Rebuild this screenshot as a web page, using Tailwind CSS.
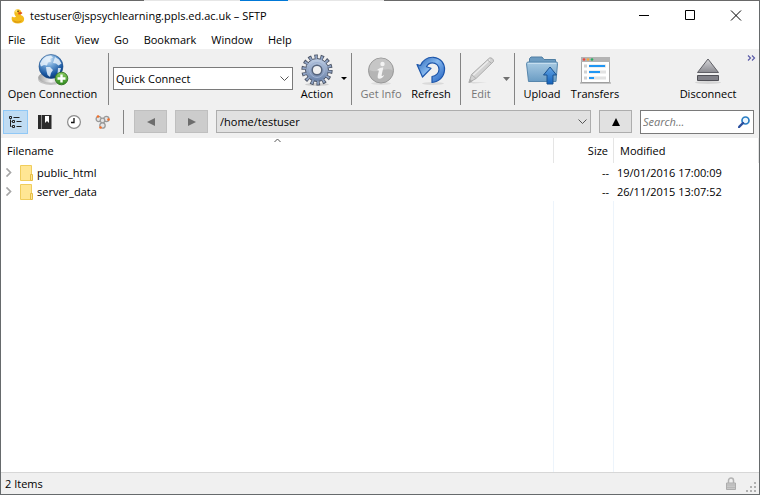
<!DOCTYPE html>
<html lang="en">
<head>
    <meta charset="UTF-8">
    <meta name="viewport" content="width=device-width, initial-scale=1.0">
    <title>testuser@jspsychlearning.ppls.ed.ac.uk – SFTP</title>
    <!-- Tailwind CSS -->
    <script src="https://cdn.jsdelivr.net/npm/@tailwindcss/browser@4"></script>
</head>
<body class="h-screen flex flex-col bg-white text-black text-[11px] leading-4 font-['Open_Sans','Noto_Sans',sans-serif] overflow-hidden">
    <!-- Desktop edge above the window -->
    <div class="flex h-px shrink-0 bg-[#696969]">
        <div class="w-36"></div>
        <div class="w-24 bg-[#e6e6e6]"></div>
        <div class="w-12 bg-[#0078d7]"></div>
        <div class="w-24 bg-[#e6e6e6]"></div>
    </div>

    <div class="flex-1 min-h-0 flex flex-col border border-t-0 border-[#666a6c]">
        <!-- Title bar -->
        <header class="flex items-center h-[30px] shrink-0 pl-[9px]">
            <svg class="size-4 mr-1" viewBox="0 0 16 16">
                <path d="M2 8.500c1 1 2.500 1 4 .2C4.500 7 4 5.500 4.500 3.500 5.200 1 8.800.4 10.500 2.300c1.200 1.500 1 3.300.1 4.700 2.800.8 4.100 2.800 3.400 5.200-.6 2.200-3 3.300-6 3.300-3.600 0-6-1.500-6.300-4C1.600 10.200 1.700 9.300 2 8.500z" fill="#f3bc1b"/>
                <path d="M3 11.500c2 2.500 6.500 2.800 9 .6-.7 2-2.600 2.700-5 2.600-2.200-.1-3.700-1.300-4-3.200z" fill="#d99410"/>
                <circle cx="6.500" cy="3" r="1.500" fill="#ffe36b"/>
                <path d="M8 4.500l3-.5 1.500 1-1.500 1.200-2.500.2z" fill="#e0541a"/>
                <circle cx="8" cy="3.300" r=".8" fill="#4b3000"/>
            </svg>
            <h1>testuser@jspsychlearning.ppls.ed.ac.uk – SFTP</h1>
            <div class="ml-auto flex h-full">
                <button aria-label="Minimize" class="w-[46px] flex items-center justify-center">
                    <svg class="size-3" viewBox="0 0 12 12"><path d="M1 5.500h10" stroke="#000"/></svg>
                </button>
                <button aria-label="Maximize" class="w-[46px] flex items-center justify-center">
                    <svg class="size-3" viewBox="0 0 12 12"><path d="M1.500 .5h9v9h-9z" fill="none" stroke="#000"/></svg>
                </button>
                <button aria-label="Close" class="w-[46px] flex items-center justify-center">
                    <svg class="size-3" viewBox="0 0 12 12"><path d="M1 .5l10 10M11 .5L1 10.500" stroke="#000"/></svg>
                </button>
            </div>
        </header>

        <!-- Menu bar -->
        <nav class="flex items-center gap-[15px] h-[18px] shrink-0 pl-[7px]">
            <a href="#">File</a>
            <a href="#">Edit</a>
            <a href="#">View</a>
            <a href="#">Go</a>
            <a href="#">Bookmark</a>
            <a href="#">Window</a>
            <a href="#">Help</a>
        </nav>

        <!-- Main toolbar -->
        <div class="flex h-14 shrink-0 bg-[#f0f0f0] pt-1 pr-[3px] whitespace-nowrap">
            <button class="w-[103px] flex flex-col items-center">
                <svg class="size-8 mt-px" viewBox="0 0 32 32">
                    <defs>
                        <radialGradient id="globe" cx=".4" cy=".2" r=".85">
                            <stop offset="0" stop-color="#dcecf9"/><stop offset=".35" stop-color="#6fa3d6"/><stop offset=".75" stop-color="#1856a0"/><stop offset="1" stop-color="#0a3169"/>
                        </radialGradient>
                        <linearGradient id="base" x2="1"><stop offset="0" stop-color="#a0a0a0"/><stop offset=".5" stop-color="#f5f5f5"/><stop offset="1" stop-color="#aaa"/></linearGradient>
                        <linearGradient id="plus" y2="1" x2="0"><stop offset="0" stop-color="#8ccc62"/><stop offset="1" stop-color="#2d8a1c"/></linearGradient>
                    </defs>
                    <ellipse cx="14" cy="25" rx="13" ry="6" fill="#c4c4c4"/>
                    <ellipse cx="14" cy="23.500" rx="12.500" ry="5.500" fill="url(#base)" stroke="#aaa" stroke-width=".5"/>
                    <circle cx="14" cy="12.500" r="12" fill="url(#globe)" stroke="#174a86" stroke-width=".6"/>
                    <path d="M5 6c2-3 6-4.500 9-4.200l2 1.700-3 1.500 1 2.500-3 1-1 3-3-.5-3 1.500-1-3zM18 3l4 2.500 2.500 4-3 2-2.500-2-3-.5 1-3zM9 13l4 0 3 3-2 3-1 4-2.500-2-1-4zM21 14l3 0-1.500 5-2 1z" fill="#e7f2fb" opacity=".85"/>
                    <circle cx="24.500" cy="24.500" r="6.300" fill="url(#plus)" stroke="#39782a"/>
                    <path d="M24.500 20.500v8M20.500 24.500h8" stroke="#fff" stroke-width="2.400"/>
                </svg>
                Open Connection
            </button>
            <div class="w-px mx-1 bg-[#848484]"></div>
            <div class="relative w-[180px] mt-3.5">
                <select aria-label="Quick Connect" class="appearance-none w-full h-[23px] bg-white border border-[#7a7a7a] px-0.5">
                    <option>Quick Connect</option>
                </select>
                <svg class="absolute right-1 top-2 w-[9px] h-[7px] pointer-events-none" viewBox="0 0 9 7"><path d="M.5 1.500l4 4 4-4" fill="none" stroke="#555"/></svg>
            </div>
            <button class="w-12 flex flex-col items-center">
                <svg class="size-8 mt-px" viewBox="0 0 32 32">
                    <defs><linearGradient id="gear" x2="0" y2="1"><stop offset="0" stop-color="#c0cfe5"/><stop offset="1" stop-color="#6780a8"/></linearGradient></defs>
                    <ellipse cx="16" cy="30.500" rx="12" ry="1.500" fill="#cfcfcf"/>
                    <!-- 14 teeth, each an outlined stub -->
                    <circle cx="16" cy="16" r="13.370" fill="none" stroke="#4d5566" stroke-width="4.500" stroke-dasharray="3.400 2.600"/>
                    <circle cx="16" cy="16" r="11.500" fill="url(#gear)" stroke="#4d5566"/>
                    <circle cx="16" cy="16" r="12.700" fill="none" stroke="#8fa3c4" stroke-width="4" stroke-dasharray="1.800 3.900" stroke-dashoffset="-.7"/>
                    <circle cx="16" cy="16" r="7.500" fill="none" stroke="#9eb1d1"/>
                    <circle cx="16" cy="16" r="4.800" fill="#f0f0f0" stroke="#56647c" stroke-width="1.500"/>
                </svg>
                Action
            </button>
            <button aria-label="Action menu" class="w-1.5 flex justify-center pt-6">
                <svg class="w-[6px] h-[3px]" viewBox="0 0 6 3"><path d="M0 0h6L3 3z"/></svg>
            </button>
            <div class="w-px mx-1 bg-[#848484]"></div>
            <button class="w-[50px] flex flex-col items-center text-[#767676]" disabled>
                <svg class="size-8 mt-px" viewBox="0 0 32 32">
                    <ellipse cx="16" cy="29.500" rx="10" ry="1.500" fill="#dedede"/>
                    <circle cx="16" cy="16.500" r="12.500" fill="#b5b5b5" stroke="#989898"/>
                    <path d="M4.500 16A11.500 11.500 0 0127.500 16C20 13 12 20 4.500 16z" fill="#c6c6c6"/>
                    <circle cx="17.500" cy="10" r="2.200" fill="#f3f3f3"/>
                    <path d="M12.500 15.500c2-1.500 4.200-2.300 5.800-2-.3 2.500-1.600 6-1.700 8.500.8.300 1.800-.5 2.700-1.200-1 2.700-3 4-5 4-2.500 0-1.700-3-.5-7.500.2-1-.3-1.300-1.300-1.100z" fill="#f3f3f3"/>
                </svg>
                Get Info
            </button>
            <button class="w-[50px] flex flex-col items-center">
                <svg class="size-8 mt-px" viewBox="0 0 32 32">
                    <defs><linearGradient id="refresh" x2="1" y2="1"><stop offset="0" stop-color="#2361b5"/><stop offset=".45" stop-color="#86b8ee"/><stop offset="1" stop-color="#1e5fc0"/></linearGradient></defs>
                    <ellipse cx="18" cy="29.500" rx="11" ry="1.500" fill="#dadada"/>
                    <path d="M5.500 11.500C8 6 13 3 18.500 3.300 26 4 30 10 29.500 16c-.5 7-5.500 12-12.500 12.500v-6c4-.5 7-3.500 7-7 0-4-3-6.700-6.500-6.700-3 0-5 1.500-6 4l4.500 1.500L7.500 23 2 10.500z" fill="url(#refresh)" stroke="#1c55aa" stroke-width="1.200" stroke-linejoin="round"/>
                </svg>
                Refresh
            </button>
            <div class="w-px mx-1 bg-[#848484]"></div>
            <button class="w-8 flex flex-col items-center text-[#767676]" disabled>
                <svg class="size-8 mt-px" viewBox="0 0 32 32">
                    <path d="M4 28l18 .5-14 1z" fill="#d8d8d8"/>
                    <path d="M4 28.500l2.500-8L24.500 4c1.500-.8 4.500 1.200 4 3.500L11 24.500z" fill="#d2d2d2" stroke="#adadad"/>
                    <path d="M8 21.500L25 5.500" stroke="#ececec" stroke-width="1.500"/>
                    <path d="M22.500 6l4.200 3.500M6.500 20.500l4.500 4M4 28.500l1-3 2 2z" fill="#9d9d9d" stroke="#b0b0b0"/>
                </svg>
                Edit
            </button>
            <button aria-label="Edit menu" class="w-[7px] ml-1.5 flex justify-center pt-6" disabled>
                <svg class="w-[7px] h-[4px]" viewBox="0 0 7 4"><path d="M0 0h7L3.500 4z" fill="#707070"/></svg>
            </button>
            <div class="w-px mx-1 bg-[#848484]"></div>
            <button class="w-[46px] flex flex-col items-center">
                <svg class="size-8 mt-px" viewBox="0 0 32 32">
                    <defs>
                        <linearGradient id="folder" x2="0" y2="1"><stop offset="0" stop-color="#a9cbe3"/><stop offset="1" stop-color="#6a9cc4"/></linearGradient>
                        <linearGradient id="up" x2="0" y2="1"><stop offset="0" stop-color="#64a5e5"/><stop offset="1" stop-color="#1262bc"/></linearGradient>
                    </defs>
                    <path d="M3.500 9V4.500l1.500-1.500h11l2 2.500h11.500V9z" fill="#6c9bc0" stroke="#507fa3"/>
                    <path d="M.5 9.500l1-1.500h29.500l.5 1.500-1.500 18H2.500z" fill="url(#folder)" stroke="#5786ac"/>
                    <path d="M2 9.500h28" stroke="#c5deef"/>
                    <path d="M24 13l6.500 8H27v9h-6v-9h-3.500z" fill="url(#up)" stroke="#1b528f"/>
                </svg>
                Upload
            </button>
            <button class="w-[60px] flex flex-col items-center">
                <svg class="size-8 mt-px" viewBox="0 0 32 32">
                    <path d="M2.500 3.500h28v25h-28z" fill="#fff" stroke="#a6a6a6"/>
                    <path d="M2 3h29v5H2z" fill="#b3b3b3"/>
                    <path d="M1 29h31" stroke="#999"/>
                    <circle cx="5" cy="5.500" r="1.300" fill="#ef4640"/><circle cx="9" cy="5.500" r="1.300" fill="#f3a53d"/><circle cx="13" cy="5.500" r="1.300" fill="#27ae60"/>
                    <path d="M5 12h3M5 18h3M5 24h3" stroke="#d2d2d2" stroke-width="3"/>
                    <path d="M10 12h17M10 18h17M10 24h17" stroke="#e2e2e2" stroke-width="3"/>
                    <path d="M10 12h16M10 18h11M10 24h5" stroke="#2196f3" stroke-width="2.200"/>
                </svg>
                Transfers
            </button>
            <button class="ml-auto w-[70px] flex flex-col items-center">
                <svg class="size-8 mt-px" viewBox="0 0 32 32">
                    <defs><linearGradient id="eject" x2="0" y2="1"><stop offset="0" stop-color="#d6d6d9"/><stop offset="1" stop-color="#8a8a90"/></linearGradient></defs>
                    <ellipse cx="16" cy="28.500" rx="13" ry="1.500" fill="#d5d5d5"/>
                    <path d="M16 5L26.500 18.500h-21z" fill="url(#eject)" stroke="#606066"/>
                    <path d="M5.500 21.500h21v5h-21z" fill="#818188" stroke="#505056"/>
                </svg>
                Disconnect
            </button>
            <button aria-label="More tools" class="w-[9px] ml-1 pt-0.5 flex items-start">
                <svg class="w-[9px] h-[6px]" viewBox="0 0 9 6"><path d="M1 .5L3.500 3 1 5.500M5 .5L7.500 3 5 5.500" fill="none" stroke="#5c5ca8" stroke-width="1.200"/></svg>
            </button>
        </div>

        <!-- Navigation toolbar -->
        <div class="flex items-center gap-2 h-[33px] shrink-0 bg-[#f0f0f0] pl-0.5 pr-[5px]">
            <div class="flex gap-1">
                <button aria-label="Outline view" class="w-[25px] h-6 flex items-center justify-center bg-[#c0dcf3] border border-[#90c8f6]">
                    <svg class="w-[13px] h-3 shrink-0" viewBox="0 0 13 12" fill="none" stroke="#222"><path d="M.5.5h2v2h-2zM3.500 4.500h2v2h-2zM3.500 9.500h2v2h-2zM4.500 1.500h6M7.500 5.500h5M7.500 10.500h5M1.500 3.500v7h1M1.500 5.500h1"/></svg>
                </button>
                <button aria-label="Bookmarks" class="w-[25px] h-6 flex items-center justify-center">
                    <svg class="w-[14px] h-[14px]" viewBox="0 0 14 14"><path d="M0 0h3v14H0zM4 0h9.500v14H4z" fill="#2b2b2b"/><path d="M3 0h1v14H3z" fill="#888"/><path d="M7 1h4v7L9 6 7 8z" fill="#fff"/></svg>
                </button>
                <button aria-label="History" class="w-[25px] h-6 flex items-center justify-center">
                    <svg class="w-[14px] h-[14px]" viewBox="0 0 14 14"><circle cx="7" cy="7" r="6.400" fill="#fff" stroke="#8b8b8b" stroke-width="1.200"/><path d="M7 3v4.500H4" fill="none" stroke="#111" stroke-width="1.300"/></svg>
                </button>
                <button aria-label="Bonjour" class="w-[25px] h-6 flex items-center justify-center">
                    <svg class="w-[15px] h-[14px]" viewBox="0 0 15 14"><g fill="#e4e4e4" stroke="#999" stroke-width="1.300"><circle cx="3.700" cy="4" r="2.600"/><circle cx="11.300" cy="4" r="2.600"/><circle cx="7.500" cy="5.500" r="2.300"/><circle cx="7.500" cy="10.500" r="2.700"/></g><g fill="#f4702a"><circle cx="3" cy="1.500" r="1.300"/><circle cx="13.500" cy="4.500" r="1.300"/><circle cx="5.500" cy="12.500" r="1.300"/></g></svg>
                </button>
            </div>
            <div class="w-px h-6 mr-0.5 bg-[#848484]"></div>
            <button aria-label="Back" class="w-[33px] h-[23px] flex items-center justify-center bg-[#ccc] border border-[#bfbfbf]" disabled>
                <svg class="size-2" viewBox="0 0 8 8"><path d="M8 0v8L0 4z" fill="#6d6d6d"/></svg>
            </button>
            <button aria-label="Forward" class="w-[33px] h-[23px] flex items-center justify-center bg-[#ccc] border border-[#bfbfbf]" disabled>
                <svg class="size-2" viewBox="0 0 8 8"><path d="M0 0v8l8-4z" fill="#6d6d6d"/></svg>
            </button>
            <div class="relative flex-1">
                <select aria-label="Path" class="block appearance-none w-full h-[23px] bg-[#e1e1e1] border border-[#adadad] px-[3px]">
                    <option>/home/testuser</option>
                </select>
                <svg class="absolute right-1 top-2 w-[9px] h-[7px] pointer-events-none" viewBox="0 0 9 7"><path d="M.5 1.500l4 4 4-4" fill="none" stroke="#555"/></svg>
            </div>
            <button aria-label="Parent folder" class="w-[33px] h-[23px] flex items-center justify-center bg-[#e1e1e1] border border-[#adadad]">
                <svg class="size-2" viewBox="0 0 8 8"><path d="M4 0l4 8H0z"/></svg>
            </button>
            <div class="relative w-[114px]">
                <input type="search" aria-label="Search" placeholder="Search..." class="block w-full h-6 bg-white border border-[#7a7a7a] pl-0.5 pr-5 placeholder:italic placeholder:text-[#757575]">
                <svg class="absolute right-1 top-1.5 size-3 pointer-events-none" viewBox="0 0 12 12"><circle cx="7.500" cy="4.500" r="3.500" fill="#eef6fd" stroke="#2a7ec4" stroke-width="1.700"/><path d="M5 7L1 11" stroke="#2b4f9e" stroke-width="2.400" stroke-linecap="round"/></svg>
            </div>
        </div>

        <!-- File list -->
        <main class="relative flex-1 min-h-0">
            <svg class="absolute left-[273px] top-0 w-[7px] h-1" viewBox="0 0 7 4"><path d="M.5 4l3-3 3 3" fill="none" stroke="#555"/></svg>
            <table class="w-full h-full table-fixed border-separate border-spacing-0">
                <thead>
                    <tr class="h-[25px]">
                        <th class="text-left font-normal px-1.5 border-r border-[#e5e5e5]">Filename</th>
                        <th class="w-[60px] text-right font-normal px-[5px] border-r border-[#e5e5e5]">Size</th>
                        <th class="w-[145px] text-left font-normal px-1.5 border-r border-[#e5e5e5]">Modified</th>
                    </tr>
                </thead>
                <tbody>
                    <tr class="h-[19px]">
                        <td>
                            <div class="flex items-center">
                                <button aria-label="Expand public_html" class="w-[19px] pl-1"><svg class="w-[7px] h-[9px]" viewBox="0 0 7 9"><path d="M1.500 .5l4 4-4 4" fill="none" stroke="#a6a6a6" stroke-width="1.700"/></svg></button>
                                <svg class="w-[13px] h-4 mr-1" viewBox="0 0 13 16"><path d="M.5.5h11v15H.5z" fill="#ffe694" stroke="#f0cd5c"/><path d="M10.500 9.500h2v6h-2z" fill="#ffe694" stroke="#e6bd45"/></svg>
                                public_html
                            </div>
                        </td>
                        <td class="text-right px-[5px]">--</td>
                        <td class="px-[3px]">19/01/2016 17:00:09</td>
                    </tr>
                    <tr class="h-[19px]">
                        <td>
                            <div class="flex items-center">
                                <button aria-label="Expand server_data" class="w-[19px] pl-1"><svg class="w-[7px] h-[9px]" viewBox="0 0 7 9"><path d="M1.500 .5l4 4-4 4" fill="none" stroke="#a6a6a6" stroke-width="1.700"/></svg></button>
                                <svg class="w-[13px] h-4 mr-1" viewBox="0 0 13 16"><path d="M.5.5h11v15H.5z" fill="#ffe694" stroke="#f0cd5c"/><path d="M10.500 9.500h2v6h-2z" fill="#ffe694" stroke="#e6bd45"/></svg>
                                server_data
                            </div>
                        </td>
                        <td class="text-right px-[5px]">--</td>
                        <td class="px-[3px]">26/11/2015 13:07:52</td>
                    </tr>
                    <tr class="h-full">
                        <td class="border-r border-[#edf4fb]"></td>
                        <td class="border-r border-[#edf4fb]"></td>
                        <td></td>
                    </tr>
                </tbody>
            </table>
        </main>

        <!-- Status bar -->
        <footer class="flex items-center h-[22px] shrink-0 bg-[#f0f0f0] border-t border-[#d7d7d7] pl-1 pr-[3px]">
            <span>2 Items</span>
            <svg class="ml-auto w-[10px] h-[13px]" viewBox="0 0 10 13"><path d="M2.500 7V3.500a2.500 2.500 0 015 0V7" fill="none" stroke="#b3b3b3" stroke-width="1.500"/><path d="M.5 6h9v6.500h-9z" fill="#c8c8c8" stroke="#adadad"/><path d="M1 8h8M1 10.500h8" stroke="#b8b8b8"/></svg>
            <svg class="ml-2.5 mt-1.5 size-[10px]" viewBox="0 0 10 10"><path d="M8 0h2v2H8zM4 4h2v2H4zM8 4h2v2H8zM0 8h2v2H0zM4 8h2v2H4zM8 8h2v2H8z" fill="#b0b0b0"/></svg>
        </footer>
    </div>
</body>
</html>
